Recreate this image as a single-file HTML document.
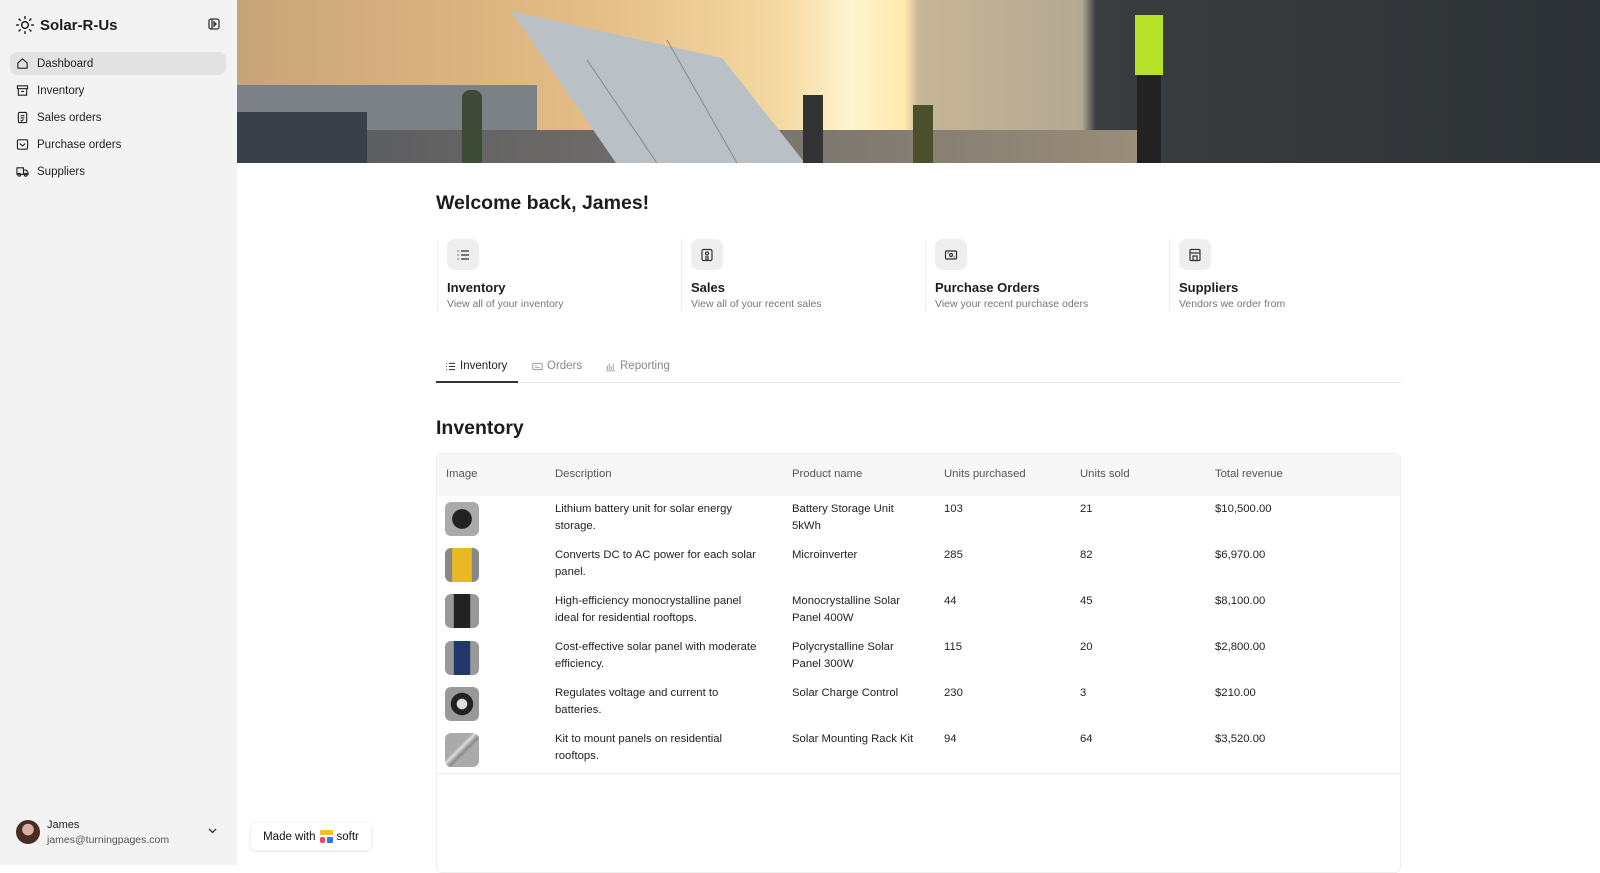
<!DOCTYPE html>
<html><head><meta charset="utf-8"><style>
*{box-sizing:border-box;margin:0;padding:0}
body{width:1600px;height:865px;overflow:hidden;font-family:"Liberation Sans",sans-serif;background:#fff;color:#1c1c1c;position:relative}
.side{position:absolute;left:0;top:0;width:237px;height:865px;background:#f3f3f3}
.logo{position:absolute;left:15px;top:15px;display:flex;align-items:center;gap:5px;font-size:15px;font-weight:bold;color:#1c1c1c}
.nav{position:absolute;left:10px;width:216px;height:23px;border-radius:7px;display:flex;align-items:center;padding-left:6px;gap:8px;font-size:11.5px;color:#222}
.nav svg{width:13px;height:13px}
.nav.act{background:#e2e2e2}
.banner{position:absolute;left:237px;top:0;width:1363px;height:163px;overflow:hidden;background:linear-gradient(90deg,#c8a479 0%,#e3bb84 25%,#f5d9a2 40%,#fff4cf 45%,#ffe9b0 49%,#c7b596 50%,#b4a994 62%,#3a3d3f 63%,#2d3236 100%)}
.main{position:absolute;left:436px;width:965px}
h1{font-size:19.5px;font-weight:bold}
.card{position:absolute;top:239px;width:240px;height:72px;border-left:1px solid #eee}
.ic{position:absolute;left:9px;top:0;width:32px;height:31px;border-radius:8px;background:#eeeeee;display:flex;align-items:center;justify-content:center}
.ct{position:absolute;left:9px;top:41px;font-size:13px;font-weight:bold;color:#1c1c1c}
.cs{position:absolute;left:9px;top:59px;font-size:10.5px;color:#777;white-space:nowrap}
.tab{position:absolute;top:360px;font-size:11.5px;color:#888;display:flex;align-items:center;gap:4px}
.tbl{position:absolute;left:436px;top:453px;width:965px;height:420px;border:1px solid #eee;border-radius:6px}
.th{position:absolute;left:0;top:0;width:100%;height:42px;background:#f7f7f7;border-radius:6px 6px 0 0}
.c{position:absolute;font-size:11.3px;line-height:17px;color:#222}
.h{color:#555}
.thumb{position:absolute;left:8px;width:34px;height:34px;border-radius:6px;background:#999}
</style></head><body>
<div class="side">
 <div class="logo"><svg width="20" height="20" viewBox="0 0 24 24" fill="none" stroke="#222" stroke-width="1.8" stroke-linecap="round"><circle cx="12" cy="12" r="4"/><path d="M12 2v2M12 20v2M2 12h2M20 12h2M4.9 4.9l1.4 1.4M17.7 17.7l1.4 1.4M4.9 19.1l1.4-1.4M17.7 6.3l1.4-1.4"/></svg>Solar-R-Us</div>
 <svg style="position:absolute;left:208px;top:18px" width="12" height="12" viewBox="0 0 12 12" fill="none" stroke="#333" stroke-width="1.3"><rect x="1" y="1" width="10" height="10" rx="2"/><path d="M4 1v10M6 4l2 2-2 2z"/></svg>
 <div class="nav act" style="top:52px"><svg viewBox="0 0 14 14" fill="none" stroke="#222" stroke-width="1.2"><path d="M2 6.5L7 2l5 4.5V12H2z"/></svg>Dashboard</div>
 <div class="nav" style="top:79px"><svg viewBox="0 0 14 14" fill="none" stroke="#222" stroke-width="1.2"><rect x="1.5" y="2" width="11" height="3"/><path d="M2.5 5v7h9V5M5.5 8h3"/></svg>Inventory</div>
 <div class="nav" style="top:106px"><svg viewBox="0 0 14 14" fill="none" stroke="#222" stroke-width="1.2"><rect x="2.5" y="1.5" width="9" height="11" rx="1.5"/><path d="M5 5h4M5 7.5h4M5 10l1 1 2-2"/></svg>Sales orders</div>
 <div class="nav" style="top:133px"><svg viewBox="0 0 14 14" fill="none" stroke="#222" stroke-width="1.2"><rect x="1.5" y="2" width="11" height="10" rx="1.5"/><path d="M4 6l3 2.5L10 6"/></svg>Purchase orders</div>
 <div class="nav" style="top:160px"><svg viewBox="0 0 14 14" fill="none" stroke="#222" stroke-width="1.2"><path d="M1 3h7v7H1zM8 5.5h3l2 2.5v2H8"/><circle cx="3.5" cy="10.5" r="1.5"/><circle cx="10.5" cy="10.5" r="1.5"/></svg>Suppliers</div>
 <div style="position:absolute;left:16px;top:820px;width:24px;height:24px;border-radius:50%;background:radial-gradient(circle at 50% 40%,#d8b0a0 0 30%,#4a2c22 32%)"></div>
 <div style="position:absolute;left:47px;top:819px;font-size:11px;color:#222">James</div>
 <div style="position:absolute;left:47px;top:834px;font-size:10.5px;color:#555">james@turningpages.com</div>
 <svg style="position:absolute;left:208px;top:828px" width="9" height="6" viewBox="0 0 9 6" fill="none" stroke="#333" stroke-width="1.3"><path d="M1 1l3.5 3.5L8 1"/></svg>
</div>
<div style="position:absolute;left:251px;top:823px;width:120px;height:27px;background:#fff;border-radius:5px;box-shadow:0 1px 4px rgba(0,0,0,.12);display:flex;align-items:center;justify-content:center;gap:4px;font-size:11.5px;color:#111">Made with <span style="display:inline-block;width:13px;height:13px;position:relative"><i style="position:absolute;left:0;top:0;width:13px;height:5px;background:#fbbf24;border-radius:1px"></i><i style="position:absolute;left:0;top:7px;width:5px;height:6px;background:#ef4469;border-radius:2px"></i><i style="position:absolute;left:7px;top:7px;width:6px;height:6px;background:#3b6cf6;border-radius:1px"></i></span>softr</div>

<div class="banner">
 <div style="position:absolute;left:0;top:85px;width:300px;height:50px;background:#7c8087"></div>
 <div style="position:absolute;left:0;top:130px;width:913px;height:40px;background:linear-gradient(90deg,#54575b,#7a7570 60%,#9b8e7a)"></div>
 <div style="position:absolute;left:0;top:112px;width:130px;height:51px;background:#3a4047"></div>
 <div style="position:absolute;left:380px;top:40px;width:2px;height:120px;background:#555"></div>
 <svg style="position:absolute;left:0;top:0" width="1363" height="163"><polygon points="274,11 485,58 568,163 379,163" fill="#b9c0c6"/><path d="M350,60 L420,163 M430,40 L500,163" stroke="#888" stroke-width="1"/></svg>
 <div style="position:absolute;left:225px;top:90px;width:20px;height:73px;background:#3d4a34;border-radius:8px 8px 0 0"></div>
 <div style="position:absolute;left:566px;top:95px;width:20px;height:68px;background:#333"></div>
 <div style="position:absolute;left:676px;top:105px;width:20px;height:58px;background:#4a4f2c"></div>
 <div style="position:absolute;left:898px;top:15px;width:28px;height:60px;background:#b7e02a"></div>
 <div style="position:absolute;left:900px;top:75px;width:24px;height:88px;background:#222"></div>
</div>

<h1 class="main" style="top:192px">Welcome back, James!</h1>
<div class="card" style="left:437px"><div class="ic"><svg width="14" height="14" viewBox="0 0 14 14" fill="none" stroke="#333" stroke-width="1.2"><path d="M5 3h8M5 7h8M5 11h8M1.5 3h1M1.5 7h1M1.5 11h1"/></svg></div><div class="ct">Inventory</div><div class="cs">View all of your inventory</div></div>
<div class="card" style="left:681px"><div class="ic"><svg width="14" height="14" viewBox="0 0 14 14" fill="none" stroke="#333" stroke-width="1.2"><rect x="2" y="1.5" width="10" height="11" rx="1.5"/><circle cx="7" cy="5.5" r="1.5"/><path d="M5 9h4M5 11h4"/></svg></div><div class="ct">Sales</div><div class="cs">View all of your recent sales</div></div>
<div class="card" style="left:925px"><div class="ic"><svg width="14" height="14" viewBox="0 0 14 14" fill="none" stroke="#333" stroke-width="1.2"><rect x="1.5" y="3" width="11" height="8" rx="1"/><circle cx="7" cy="7" r="1.5"/><path d="M3.5 5h1M9.5 9h1"/></svg></div><div class="ct">Purchase Orders</div><div class="cs">View your recent purchase oders</div></div>
<div class="card" style="left:1169px"><div class="ic"><svg width="14" height="14" viewBox="0 0 14 14" fill="none" stroke="#333" stroke-width="1.2"><rect x="2" y="1.5" width="10" height="11" rx="1"/><path d="M2 5h10M5 8h4v4.5H5z"/></svg></div><div class="ct">Suppliers</div><div class="cs">Vendors we order from</div></div>

<div class="tab" style="left:445px;color:#222"><svg width="11" height="11" viewBox="0 0 14 14" fill="none" stroke="#333" stroke-width="1.3"><path d="M5 3h8M5 7h8M5 11h8M1.5 3h1M1.5 7h1M1.5 11h1"/></svg>Inventory</div>
<div class="tab" style="left:532px"><svg width="11" height="11" viewBox="0 0 14 14" fill="none" stroke="#999" stroke-width="1.2"><rect x="1" y="3" width="12" height="8" rx="1"/><path d="M4 6h2M4 8h6"/></svg>Orders</div>
<div class="tab" style="left:605px"><svg width="11" height="11" viewBox="0 0 14 14" fill="none" stroke="#999" stroke-width="1.2"><path d="M1.5 12.5h11M3 11V6M5.5 11V3M8 11V7M10.5 11V4"/></svg>Reporting</div>
<div style="position:absolute;left:436px;top:382px;width:965px;height:1px;background:#e8e8e8"></div>
<div style="position:absolute;left:436px;top:381px;width:82px;height:2px;background:#333"></div>

<h1 class="main" style="top:417px">Inventory</h1>
<div class="tbl">
 <div class="th"></div>
 <div class="c h" style="left:9px;top:12px">Image</div>
 <div class="c h" style="left:118px;top:12px">Description</div>
 <div class="c h" style="left:355px;top:12px">Product name</div>
 <div class="c h" style="left:507px;top:12px">Units purchased</div>
 <div class="c h" style="left:643px;top:12px">Units sold</div>
 <div class="c h" style="left:778px;top:12px">Total revenue</div>

 <div class="thumb" style="top:48px;background:radial-gradient(circle,#222 40%,#aaa 42%)"></div>
 <div class="c" style="left:118px;top:47px">Lithium battery unit for solar energy<br>storage.</div>
 <div class="c" style="left:355px;top:47px">Battery Storage Unit<br>5kWh</div>
 <div class="c" style="left:507px;top:47px">103</div><div class="c" style="left:643px;top:47px">21</div><div class="c" style="left:778px;top:47px">$10,500.00</div>

 <div class="thumb" style="top:94px;background:linear-gradient(90deg,#888 20%,#e8b923 22%,#e8b923 78%,#888 80%)"></div>
 <div class="c" style="left:118px;top:93px">Converts DC to AC power for each solar<br>panel.</div>
 <div class="c" style="left:355px;top:93px">Microinverter</div>
 <div class="c" style="left:507px;top:93px">285</div><div class="c" style="left:643px;top:93px">82</div><div class="c" style="left:778px;top:93px">$6,970.00</div>

 <div class="thumb" style="top:140px;background:linear-gradient(90deg,#999 25%,#222 27%,#222 73%,#999 75%)"></div>
 <div class="c" style="left:118px;top:139px">High-efficiency monocrystalline panel<br>ideal for residential rooftops.</div>
 <div class="c" style="left:355px;top:139px">Monocrystalline Solar<br>Panel 400W</div>
 <div class="c" style="left:507px;top:139px">44</div><div class="c" style="left:643px;top:139px">45</div><div class="c" style="left:778px;top:139px">$8,100.00</div>

 <div class="thumb" style="top:187px;background:linear-gradient(90deg,#999 25%,#23386a 27%,#23386a 73%,#999 75%)"></div>
 <div class="c" style="left:118px;top:185px">Cost-effective solar panel with moderate<br>efficiency.</div>
 <div class="c" style="left:355px;top:185px">Polycrystalline Solar<br>Panel 300W</div>
 <div class="c" style="left:507px;top:185px">115</div><div class="c" style="left:643px;top:185px">20</div><div class="c" style="left:778px;top:185px">$2,800.00</div>

 <div class="thumb" style="top:233px;background:radial-gradient(ellipse at 50% 50%,#ddd 20%,#222 24%,#222 45%,#999 48%)"></div>
 <div class="c" style="left:118px;top:231px">Regulates voltage and current to<br>batteries.</div>
 <div class="c" style="left:355px;top:231px">Solar Charge Control</div>
 <div class="c" style="left:507px;top:231px">230</div><div class="c" style="left:643px;top:231px">3</div><div class="c" style="left:778px;top:231px">$210.00</div>

 <div class="thumb" style="top:279px;background:linear-gradient(135deg,#aaa 40%,#ddd 45%,#888 55%,#aaa 60%)"></div>
 <div class="c" style="left:118px;top:277px">Kit to mount panels on residential<br>rooftops.</div>
 <div class="c" style="left:355px;top:277px">Solar Mounting Rack Kit</div>
 <div class="c" style="left:507px;top:277px">94</div><div class="c" style="left:643px;top:277px">64</div><div class="c" style="left:778px;top:277px">$3,520.00</div>
 <div style="position:absolute;left:0;top:319px;width:100%;height:1px;background:#eee"></div>
</div>
</body></html>
